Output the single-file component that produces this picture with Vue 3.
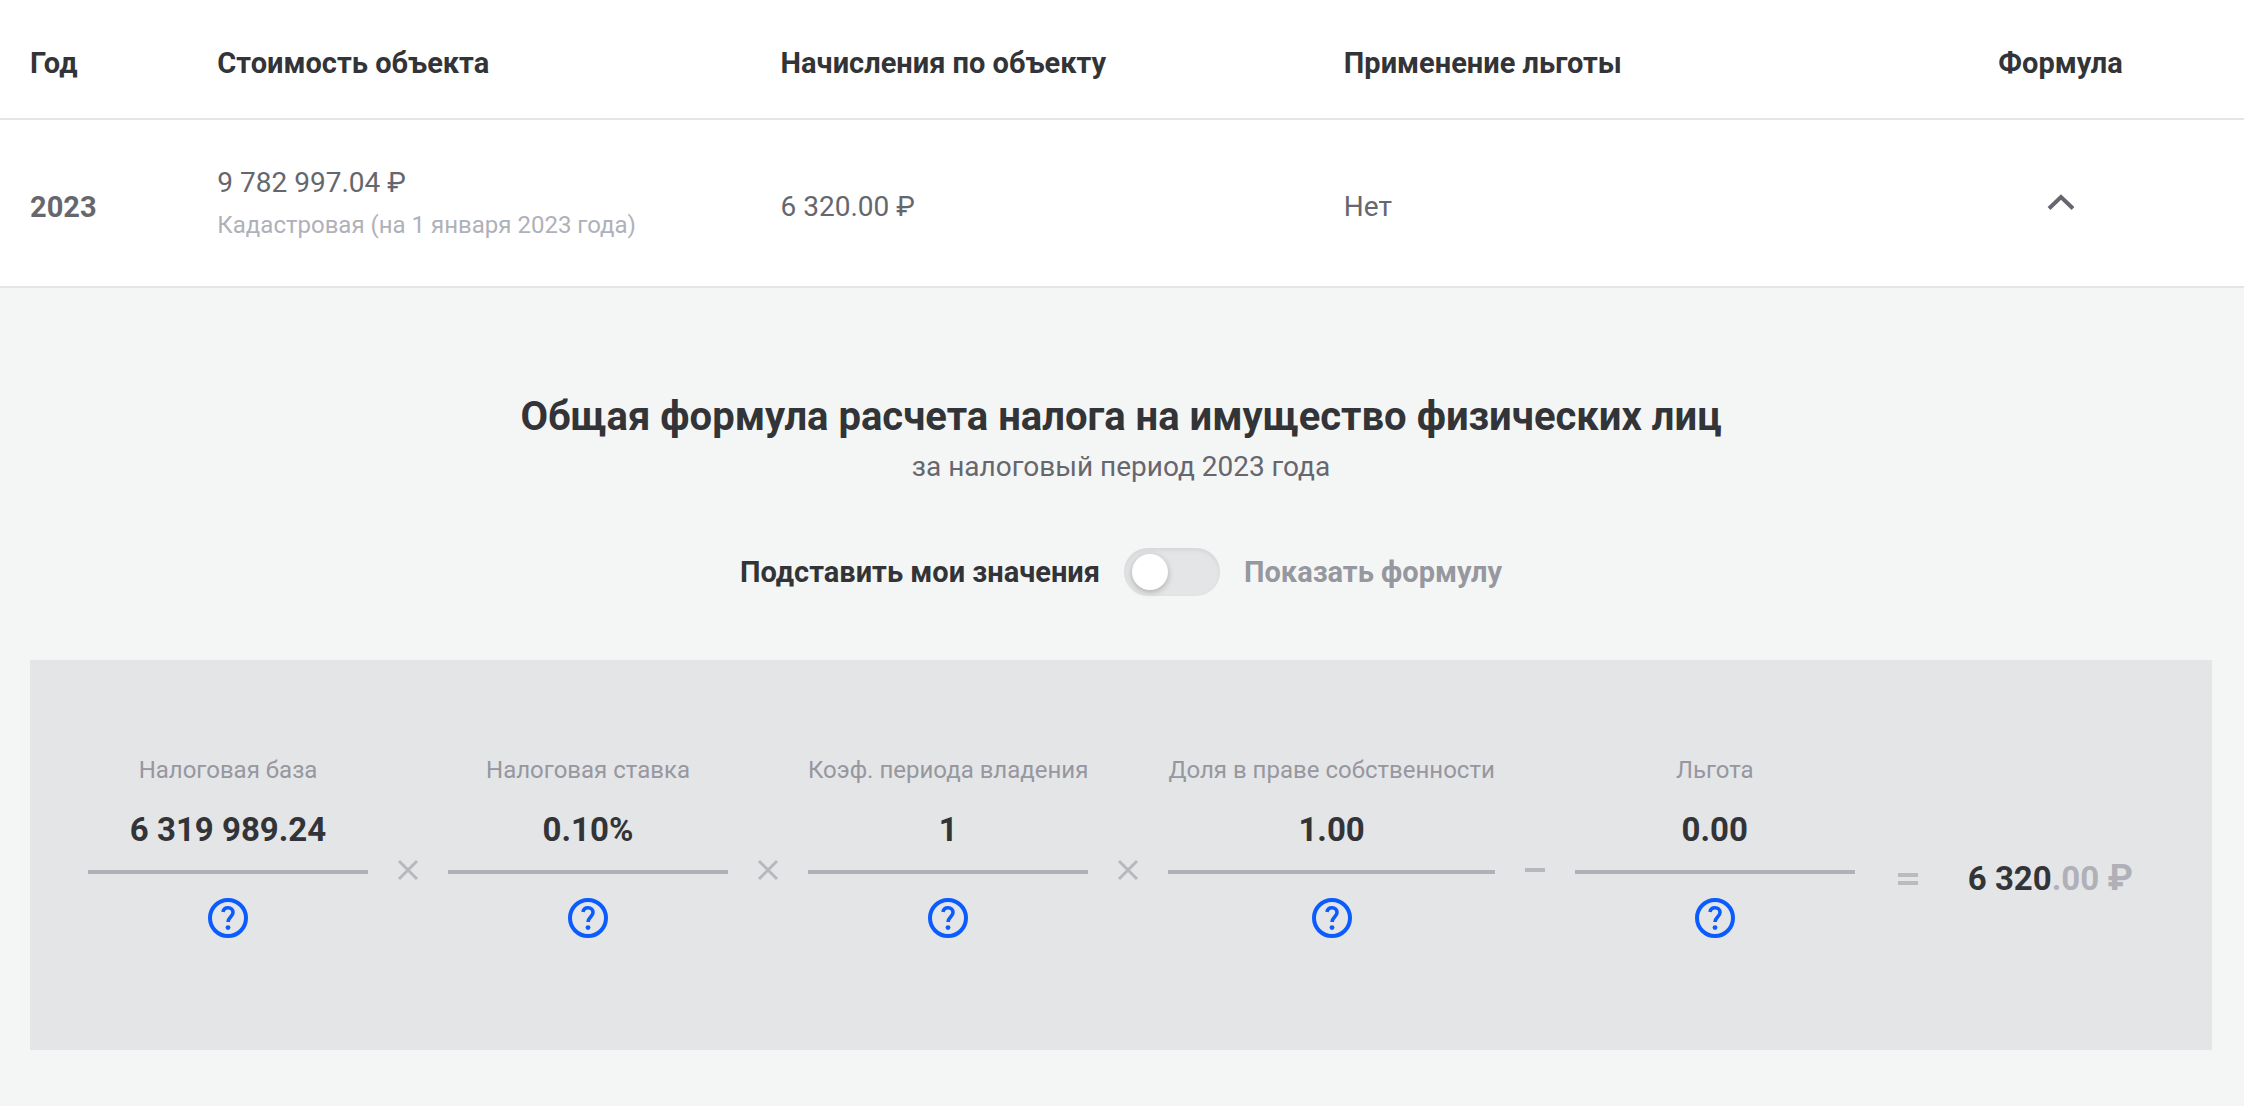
<script setup>
import { ref } from 'vue'

const expanded = ref(true)
const showFormula = ref(false)

const factors = [
  { id: 'base', label: 'Налоговая база', value: '6 319 989.24', next: 'times' },
  { id: 'rate', label: 'Налоговая ставка', value: '0.10%', next: 'times' },
  { id: 'period', label: 'Коэф. периода владения', value: '1', next: 'times' },
  { id: 'share', label: 'Доля в праве собственности', value: '1.00', next: 'minus' },
  { id: 'benefit', label: 'Льгота', value: '0.00', next: null },
]

const operators = {
  times: { path: 'M3 3L21 21M21 3L3 21', title: 'умножить' },
  minus: { path: 'M2 12H22', title: 'минус' },
}
</script>

<template>
  <main class="page">
    <table class="charges">
      <thead>
        <tr>
          <th class="col-year">Год</th>
          <th>Стоимость объекта</th>
          <th>Начисления по объекту</th>
          <th>Применение льготы</th>
          <th class="col-formula">Формула</th>
        </tr>
      </thead>
      <tbody>
        <tr>
          <td class="year">2023</td>
          <td>
            <div class="cost">9 782 997.04 ₽</div>
            <div class="cost-note">Кадастровая (на 1 января 2023 года)</div>
          </td>
          <td>6 320.00 ₽</td>
          <td>Нет</td>
          <td class="col-formula">
            <button class="expander" type="button" aria-label="Формула" :aria-expanded="expanded" @click="expanded = !expanded">
              <svg viewBox="0 0 28 18" width="28" height="18" aria-hidden="true">
                <path d="M2 15.500L14 4L26 15.500" fill="none" stroke="currentColor" stroke-width="4" />
              </svg>
            </button>
          </td>
        </tr>
      </tbody>
    </table>

    <section v-if="expanded" class="details">
      <h2 class="title">Общая формула расчета налога на имущество физических лиц</h2>
      <p class="subtitle">за налоговый период 2023 года</p>

      <div class="switch-row">
        <label for="mode" class="switch-label" :class="{ muted: showFormula }">Подставить мои значения</label>
        <input id="mode" v-model="showFormula" class="switch" type="checkbox" role="switch" />
        <label for="mode" class="switch-label" :class="{ muted: !showFormula }">Показать формулу</label>
      </div>

      <div class="formula">
        <template v-for="factor in factors" :key="factor.id">
          <div class="factor">
            <div class="factor-label">{{ factor.label }}</div>
            <div class="factor-value">{{ factor.value }}</div>
            <button class="help" type="button" :aria-label="'Подробнее: ' + factor.label">
              <svg viewBox="0 0 24 24" width="48" height="48" aria-hidden="true">
                <circle cx="12" cy="12" r="9" fill="none" stroke="currentColor" stroke-width="2" />
                <path d="M9.500 9C9.700 7.600 10.700 6.900 12 6.900C13.500 6.900 14.500 7.800 14.500 9.200C14.500 11.300 12 11.700 12 14" fill="none" stroke="currentColor" stroke-width="1.800" />
                <circle cx="12" cy="16.800" r="1.200" fill="currentColor" />
              </svg>
            </button>
          </div>
          <svg v-if="factor.next" class="operator" viewBox="0 0 24 24" width="24" height="24" role="img" :aria-label="operators[factor.next].title">
            <path :d="operators[factor.next].path" fill="none" stroke="currentColor" :stroke-width="factor.next === 'times' ? 3 : 4" />
          </svg>
        </template>
        <div class="result">
          <svg class="equals" viewBox="0 0 24 24" width="24" height="24" role="img" aria-label="равно">
            <path d="M2 8H22M2 16H22" fill="none" stroke="currentColor" stroke-width="4" />
          </svg>
          <span class="total">6 320<span class="fraction">.00 <span class="currency">₽</span></span></span>
        </div>
      </div>
    </section>
  </main>
</template>

<style>
body {
  margin: 0;
  background: #f4f6f5;
}
</style>

<style scoped>
.page {
  font-family: Roboto, "Liberation Sans", sans-serif;
  font-size: 28px;
  line-height: 40px;
  color: #66676e;
}

.charges {
  width: 100%;
  table-layout: fixed;
  border-collapse: separate;
  border-spacing: 0;
  background: #fff;
}

.charges th,
.charges td {
  width: 25.1%;
  box-sizing: border-box;
  padding: 43px 0 35px 30px;
  border-bottom: 2px solid #e4e5e4;
  text-align: left;
  vertical-align: middle;
}

.charges th {
  color: #333437;
  font-size: 29px;
  font-weight: 700;
}

.charges .col-year {
  width: 8.35%;
}

.charges .col-formula {
  width: 16.35%;
  padding-left: 0;
  padding-right: 0;
  text-align: center;
}

.charges .year {
  font-size: 29px;
  font-weight: 700;
}

.cost-note {
  padding-bottom: 4px;
  font-size: 24px;
  line-height: 44px;
  color: #b0b1b8;
}

.expander {
  display: flex;
  margin: 0 auto;
  padding: 2px 8px 12px;
  border: 0;
  background: none;
  color: #66676e;
  cursor: pointer;
}

.details {
  padding: 105px 32px 56px 30px;
}

.title {
  margin: 0;
  font-size: 40px;
  line-height: 48px;
  font-weight: 700;
  color: #333437;
  text-align: center;
}

.subtitle {
  margin: 6px 0 0;
  text-align: center;
}

.switch-row {
  display: flex;
  align-items: center;
  justify-content: center;
  gap: 24px;
  margin: 61px 0 64px;
}

.switch-label {
  font-size: 29px;
  font-weight: 700;
  color: #333437;
}

.switch-label.muted {
  color: #96979f;
}

.switch {
  appearance: none;
  box-sizing: border-box;
  width: 96px;
  height: 48px;
  margin: 0;
  padding: 6px 8px;
  border-radius: 24px;
  background: #e4e5e7;
  box-shadow: inset 0 2px 4px rgba(0, 0, 0, 0.08);
  cursor: pointer;
}

.switch::before {
  content: "";
  display: block;
  width: 36px;
  height: 36px;
  border-radius: 50%;
  background: #fff;
  box-shadow: 0 2px 6px rgba(0, 0, 0, 0.25);
}

.switch:checked::before {
  margin-left: auto;
}

.formula {
  display: flex;
  align-items: flex-start;
  padding: 90px 58px 108px;
  background: #e4e5e7;
}

.factor {
  display: flex;
  flex-direction: column;
  align-items: center;
  min-width: 280px;
}

.factor-label {
  font-size: 24px;
  line-height: 40px;
  white-space: nowrap;
  color: #96979f;
}

.factor-value {
  align-self: stretch;
  padding: 20px 0;
  border-bottom: 4px solid #b0b1b8;
  font-size: 33px;
  line-height: 40px;
  font-weight: 700;
  text-align: center;
  color: #333437;
}

.help {
  display: flex;
  margin-top: 20px;
  padding: 0;
  border: 0;
  background: none;
  color: #0b5cff;
  cursor: pointer;
}

.operator {
  flex: none;
  margin: 108px 28px 0;
  color: #b7b8be;
}

.result {
  display: flex;
  align-items: center;
  gap: 48px;
  margin: 108px 0 0 41px;
}

.equals {
  flex: none;
  margin: 8px 0;
  color: #babbbf;
}

.total {
  font-size: 33px;
  font-weight: 700;
  white-space: nowrap;
  color: #333437;
}

.fraction {
  color: #b0b1b8;
}

.currency {
  font-size: 36px;
}
</style>
